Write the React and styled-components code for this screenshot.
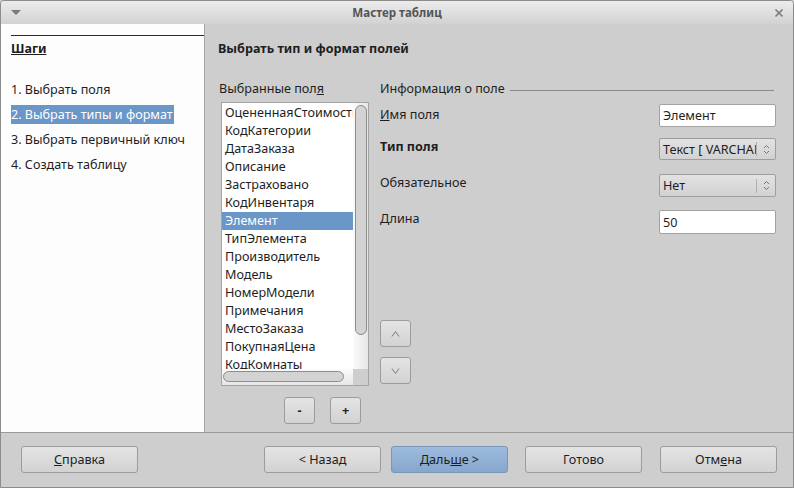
import React from "react";
import styled, { createGlobalStyle } from "styled-components";

const GlobalStyle = createGlobalStyle`
  html, body {
    margin: 0;
    padding: 0;
    background: #cecece;
  }
  body {
    font-family: "Noto Sans", "Open Sans", sans-serif;
    font-size: 12.6px;
    color: #1e1e1e;
  }
`;

const Window = styled.div`
  width: 794px;
  height: 488px;
  box-sizing: border-box;
  border: 1px solid #8c8c8c;
  border-radius: 4px 4px 0 0;
  background: #cecece;
  display: flex;
  flex-direction: column;
  overflow: hidden;
`;

const TitleBar = styled.div`
  height: 23px;
  flex: none;
  display: flex;
  align-items: center;
  justify-content: space-between;
  padding: 0 9px 0 10px;
  background: linear-gradient(#ececec, #d2d2d2);
  position: relative;
`;

const Title = styled.div`
  position: absolute;
  left: 0;
  right: 0;
  text-align: center;
  font-weight: bold;
  color: #555;
  font-size: 11.6px;
  pointer-events: none;
`;

const Main = styled.div`
  flex: 1;
  display: flex;
  min-height: 0;
`;

const Steps = styled.div`
  width: 204px;
  flex: none;
  background: #fdfdfd;
  border-right: 1px solid #a6a6a6;
  padding-left: 10px;
  box-sizing: border-box;
  padding-top: 11px;
`;

const StepsHead = styled.div`
  border-top: 1px solid #2a2a2a;
  padding-top: 4px;
  line-height: 18px;
  font-weight: bold;
  text-decoration: underline;
  margin-bottom: 19px;
`;

const Step = styled.div`
  line-height: 25px;
  height: 25px;
  white-space: nowrap;
  span {
    background: ${(p) => (p.$active ? "#6a96c8" : "transparent")};
    color: ${(p) => (p.$active ? "#fff" : "#1e1e1e")};
    padding: 1px 1px 1px 0;
  }
`;

const Content = styled.div`
  flex: 1;
  padding: 16px 0 0 13px;
  display: flex;
  flex-direction: column;
`;

const PageTitle = styled.div`
  font-weight: bold;
  line-height: 18px;
`;

const Columns = styled.div`
  display: flex;
  margin-top: 22px;
`;

const FieldsCol = styled.div`
  width: 150px;
  padding-left: 1px;
  display: flex;
  flex-direction: column;
`;

const Caption = styled.div`
  line-height: 18px;
  white-space: nowrap;
  u {
    text-decoration: underline;
  }
`;

const ListBox = styled.div`
  margin: 4px 0 0 2px;
  width: 148px;
  height: 284px;
  box-sizing: border-box;
  border: 1px solid #a4a4a4;
  background: #fff;
  display: grid;
  grid-template-columns: 1fr 15px;
  grid-template-rows: 1fr 16px;
`;

const Items = styled.div`
  overflow: hidden;
  padding-top: 1px;
`;

const Item = styled.div`
  height: 18px;
  line-height: 18px;
  padding-left: 3px;
  white-space: nowrap;
  overflow: hidden;
  background: ${(p) => (p.$selected ? "#6a96c8" : "transparent")};
  color: ${(p) => (p.$selected ? "#fff" : "#1e1e1e")};
`;

const VTrough = styled.div`
  background: linear-gradient(90deg, #fbfbfb, #e6e6e6);
  padding: 2px 1px 0 2px;
`;

const VThumb = styled.div`
  height: 230px;
  border: 1px solid #8d8d8d;
  border-radius: 6px;
  background: #d3d3d3;
  box-sizing: border-box;
`;

const HTrough = styled.div`
  background: linear-gradient(#fbfbfb, #e6e6e6);
  padding: 2px 0 0 1px;
`;

const HThumb = styled.div`
  width: 121px;
  height: 11px;
  border: 1px solid #8d8d8d;
  border-radius: 6px;
  background: #d3d3d3;
  box-sizing: border-box;
`;

const Corner = styled.div`
  background: #cecece;
`;

const SmallRow = styled.div`
  display: flex;
  gap: 15px;
  margin: 11px 0 0 65px;
`;

const Button = styled.button`
  font-family: inherit;
  font-size: 12.6px;
  color: #1e1e1e;
  width: ${(p) => p.$w || 117}px;
  height: 27px;
  border: 1px solid #9c9c9c;
  border-radius: 3px;
  background: ${(p) =>
    p.$primary
      ? "linear-gradient(#9dbbdd, #86a7cc)"
      : "linear-gradient(#e4e4e4, #d2d2d2)"};
  border-color: ${(p) => (p.$primary ? "#7a95b5" : "#9c9c9c")};
  padding: 0;
  display: flex;
  align-items: center;
  justify-content: center;
  font-weight: ${(p) => (p.$bold ? "bold" : "normal")};
  u {
    text-decoration: underline;
  }
`;

const InfoCol = styled.div`
  margin-left: 11px;
  width: 396px;
  display: flex;
  flex-direction: column;
`;

const GroupTitle = styled.div`
  display: flex;
  align-items: center;
  gap: 5px;
  line-height: 18px;
  padding-right: 2px;
  &::after {
    content: "";
    flex: 1;
    height: 1px;
    background: #8a8a8a;
    margin-top: 2px;
  }
`;

const FieldRow = styled.div`
  display: flex;
  justify-content: space-between;
  align-items: flex-start;
  margin-top: ${(p) => p.$mt}px;
`;

const FieldLabel = styled.div`
  line-height: 18px;
  padding-top: ${(p) => p.$pt || 0}px;
  font-weight: ${(p) => (p.$bold ? "bold" : "normal")};
  u {
    text-decoration: underline;
  }
`;

const TextInput = styled.div`
  width: 117px;
  height: ${(p) => p.$h || 23}px;
  box-sizing: border-box;
  border: 1px solid #a2a2a2;
  border-radius: 2px;
  background: #fff;
  padding-left: 3px;
  display: flex;
  align-items: center;
  white-space: nowrap;
  overflow: hidden;
`;

const Select = styled.div`
  width: 117px;
  height: ${(p) => p.$h || 22}px;
  box-sizing: border-box;
  border: 1px solid #9e9e9e;
  border-radius: 2px;
  background: linear-gradient(#e2e2e2, #d2d2d2);
  display: flex;
  align-items: center;
  overflow: hidden;
`;

const SelectText = styled.div`
  flex: 1;
  padding-left: 3px;
  white-space: nowrap;
  overflow: hidden;
`;

const SelectArrows = styled.div`
  width: 18px;
  height: 14px;
  border-left: 1px solid #b0b0b0;
  display: flex;
  align-items: center;
  justify-content: center;
`;

const MoveCol = styled.div`
  display: flex;
  flex-direction: column;
  gap: 10px;
  margin-top: 86px;
`;

const ButtonBar = styled.div`
  height: 55px;
  flex: none;
  border-top: 1px solid #9a9a9a;
  display: flex;
  align-items: center;
  padding: 0 16px 1px 20px;
  box-sizing: border-box;
`;

const Spacer = styled.div`
  flex: 1;
`;

const Arrows = () => (
  <svg width="7" height="11" viewBox="0 0 7 11">
    <path d="M1 4 L3.5 1.5 L6 4" fill="none" stroke="#777" strokeWidth="1" />
    <path d="M1 7 L3.5 9.5 L6 7" fill="none" stroke="#777" strokeWidth="1" />
  </svg>
);

const Chevron = ({ down }) => (
  <svg width="9" height="8" viewBox="0 0 9 8">
    <path
      d={down ? "M1 1.5 L4.5 6.5 L8 1.5" : "M1 6.5 L4.5 1.5 L8 6.5"}
      fill="none"
      stroke="#6f7f96"
      strokeWidth="1"
    />
  </svg>
);

const fields = [
  "ОцененнаяСтоимость",
  "КодКатегории",
  "ДатаЗаказа",
  "Описание",
  "Застраховано",
  "КодИнвентаря",
  "Элемент",
  "ТипЭлемента",
  "Производитель",
  "Модель",
  "НомерМодели",
  "Примечания",
  "МестоЗаказа",
  "ПокупнаяЦена",
  "КодКомнаты",
];

const steps = [
  "1. Выбрать поля",
  "2. Выбрать типы и формат",
  "3. Выбрать первичный ключ",
  "4. Создать таблицу",
];

export default function App() {
  return (
    <>
      <GlobalStyle />
      <Window>
        <TitleBar>
          <svg width="10" height="6" viewBox="0 0 10 6">
            <path d="M0 0 L10 0 L5 5 Z" fill="#7a7a7a" />
          </svg>
          <Title>Мастер таблиц</Title>
          <svg width="10" height="10" viewBox="0 0 10 10">
            <path d="M1.5 1.5 L8.5 8.5 M8.5 1.5 L1.5 8.5" stroke="#7a7a7a" strokeWidth="1.6" />
          </svg>
        </TitleBar>
        <Main>
          <Steps>
            <StepsHead>Шаги</StepsHead>
            {steps.map((s, i) => (
              <Step key={s} $active={i === 1}>
                <span>{s}</span>
              </Step>
            ))}
          </Steps>
          <Content>
            <PageTitle>Выбрать тип и формат полей</PageTitle>
            <Columns>
              <FieldsCol>
                <Caption>
                  Выбранные пол<u>я</u>
                </Caption>
                <ListBox>
                  <Items>
                    {fields.map((f) => (
                      <Item key={f} $selected={f === "Элемент"}>
                        {f}
                      </Item>
                    ))}
                  </Items>
                  <VTrough>
                    <VThumb />
                  </VTrough>
                  <HTrough>
                    <HThumb />
                  </HTrough>
                  <Corner />
                </ListBox>
                <SmallRow>
                  <Button $w={31} $bold>-</Button>
                  <Button $w={31} $bold>+</Button>
                </SmallRow>
              </FieldsCol>
              <InfoCol>
                <GroupTitle>Информация о поле</GroupTitle>
                <FieldRow $mt={6}>
                  <FieldLabel $pt={2}>
                    <u>И</u>мя поля
                  </FieldLabel>
                  <TextInput>Элемент</TextInput>
                </FieldRow>
                <FieldRow $mt={11}>
                  <FieldLabel $bold>Тип поля</FieldLabel>
                  <Select>
                    <SelectText>Текст [ VARCHAR ]</SelectText>
                    <SelectArrows>
                      <Arrows />
                    </SelectArrows>
                  </Select>
                </FieldRow>
                <FieldRow $mt={14}>
                  <FieldLabel>Обязательное</FieldLabel>
                  <Select $h={23}>
                    <SelectText>Нет</SelectText>
                    <SelectArrows>
                      <Arrows />
                    </SelectArrows>
                  </Select>
                </FieldRow>
                <FieldRow $mt={13}>
                  <FieldLabel>Длина</FieldLabel>
                  <TextInput $h={24}>50</TextInput>
                </FieldRow>
                <MoveCol>
                  <Button $w={31} aria-label="^">
                    <Chevron />
                  </Button>
                  <Button $w={31} aria-label="v">
                    <Chevron down />
                  </Button>
                </MoveCol>
              </InfoCol>
            </Columns>
          </Content>
        </Main>
        <ButtonBar>
          <Button>
            <u>С</u>правка
          </Button>
          <Spacer />
          <Button>&lt; Назад</Button>
          <Button $primary style={{ marginLeft: 10 }}>
            Даль<u>ш</u>е &gt;
          </Button>
          <Button style={{ marginLeft: 17 }}>Готово</Button>
          <Button style={{ marginLeft: 18 }}>
            Отм<u>е</u>на
          </Button>
        </ButtonBar>
      </Window>
    </>
  );
}
